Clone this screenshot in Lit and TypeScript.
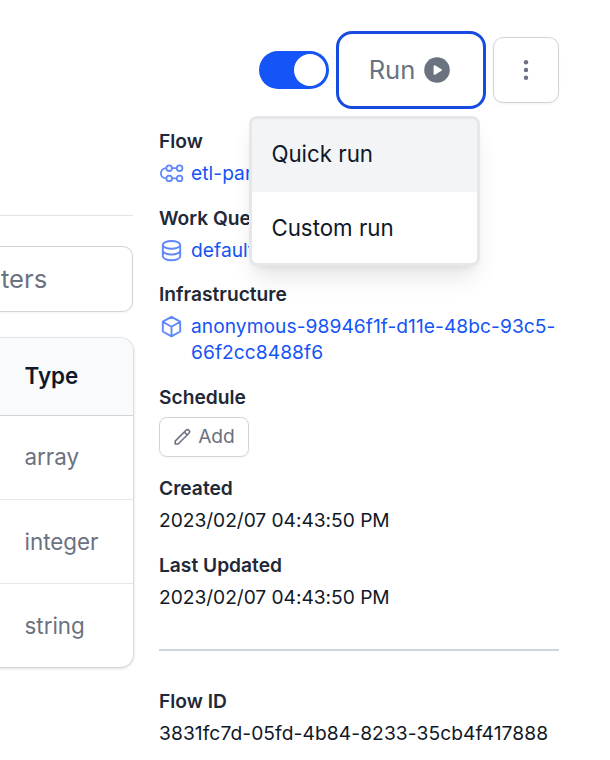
import { LitElement, html, css, svg } from "lit";
import { customElement } from "lit/decorators.js";

const flowIcon = svg`<svg class="icon" viewBox="0 0 25 25" fill="none" stroke="currentColor" stroke-width="1.8">
  <circle cx="10.2" cy="7.2" r="2.8"/><circle cx="20.6" cy="7.2" r="2.8"/>
  <circle cx="10.2" cy="17.4" r="2.8"/><circle cx="20.6" cy="17.4" r="2.8"/>
  <path d="M7.4 7.2C4 7.2 1.9 9.4 1.9 12.3s2.1 5.1 5.5 5.1M13 7.2h4.8M13 17.4h4.8"/></svg>`;
const queueIcon = svg`<svg class="icon" viewBox="0 0 25 25" fill="none" stroke="currentColor" stroke-width="1.9">
  <ellipse cx="12.5" cy="6.9" rx="8.7" ry="3.9"/>
  <path d="M3.8 6.9v11.4c0 2.2 3.9 3.9 8.7 3.9s8.7-1.7 8.7-3.9V6.9M3.8 12.6c0 2.2 3.9 3.9 8.7 3.9s8.7-1.7 8.7-3.9"/></svg>`;
const cubeIcon = svg`<svg class="icon" viewBox="0 0 25 25" fill="none" stroke="currentColor" stroke-width="1.9" stroke-linejoin="round" stroke-linecap="round">
  <path d="M21.2 7.7 12.5 2.8 3.8 7.7v9.8l8.7 4.9 8.7-4.9zM3.8 7.7l8.7 5 8.7-5M12.5 12.7v9.7"/></svg>`;

@customElement("app-root")
export class AppRoot extends LitElement {
  static styles = css`
    :host {
      display: flex;
      gap: 25px;
      box-sizing: border-box;
      width: 610px;
      height: 760px;
      overflow: hidden;
      background: #fff;
      color: #111827;
      font-family: Inter, "Liberation Sans", sans-serif;
      font-size: 19.2px;
      line-height: 25.6px;
    }
    * { box-sizing: border-box; }
    button { font: inherit; margin: 0; padding: 0; background: #fff; color: #6b7280; }
    .main { width: 134px; flex: none; padding-top: 215px; }
    .rule { width: 133px; height: 1px; background: #e2e4e8; }
    .search {
      width: 133px; height: 66px; margin-top: 30px; padding-left: 1px; display: flex; align-items: center;
      border: 1px solid #d1d5db; border-left: 0; border-radius: 0 10px 10px 0;
      color: #6b7280; font-size: 25.6px; box-shadow: 0 1px 3px rgba(0,0,0,.05);
    }
    .table {
      width: 133px; margin-top: 26px; border-radius: 0 13px 13px 0; overflow: hidden;
      box-shadow: 0 0 0 1px rgba(0,0,0,.06), 0 1px 3px 1px rgba(0,0,0,.13);
      font-size: 22.4px; color: #6b7280;
    }
    .cell { height: 84px; padding: 0 0 0 24.5px; display: flex; align-items: center; }
    .cell + .cell { border-top: 1px solid #e5e7eb; }
    .cell.head { height: 77px; padding-bottom: 1px; background: #f9fafb; color: #111827; font-weight: 600; }
    .cell.head + .cell { border-top-color: #d1d5db; padding-bottom: 2px; }
    .side { width: 400px; flex: none; padding-top: 31px; }
    .actions { display: flex; align-items: center; justify-content: flex-end; height: 78px; }
    .toggle {
      width: 70px; height: 38px; border-radius: 19px; background: #1554f6;
      display: flex; align-items: center; justify-content: flex-end; padding: 0 3px; margin-right: 7px;
    }
    .thumb { width: 32px; height: 32px; border-radius: 50%; background: #fff; }
    .run-wrap { position: relative; margin-right: 7px; }
    .run {
      width: 150px; height: 78px; border: 3px solid #174be0; border-radius: 16px; padding-right: 3px;
      display: flex; align-items: center; justify-content: center; gap: 9px; font-size: 25.6px;
    }
    .run svg { width: 26px; height: 26px; display: block; }
    .more {
      width: 66px; height: 66px; border: 1px solid #d1d5db; border-radius: 10px;
      display: flex; align-items: center; justify-content: center; box-shadow: 0 1px 3px rgba(0,0,0,.06);
    }
    .more svg { width: 6px; height: 22px; display: block; }
    .menu {
      position: absolute; top: 85px; right: 6px; width: 231px; height: 150px; z-index: 1;
      border: 3px solid #e5e7eb; border-radius: 8px; background: #fff; overflow: hidden;
      box-shadow: 0 16px 24px -5px rgba(0,0,0,.1), 0 6px 10px -6px rgba(0,0,0,.1);
      font-size: 22.3px;
    }
    .option { height: 73px; padding: 0 19.4px 2px; display: flex; align-items: center; }
    .option.active { background: #f3f4f6; padding-bottom: 4px; }
    .details { display: flex; flex-direction: column; gap: 19.2px; padding-top: 19.9px; }
    .item { display: flex; flex-direction: column; align-items: flex-start; gap: 6.4px; }
    .label { font-weight: 600; color: #1f2937; }
    .link { display: flex; gap: 7px; color: #1554f6; letter-spacing: .05px; }
    .date { letter-spacing: -.04px; }
    .id { letter-spacing: .09px; }
    .icon { width: 25px; height: 25px; flex: none; color: #6088f8; }
    .add {
      width: 90px; height: 40px; border: 1px solid #d1d5db; border-radius: 8px;
      display: flex; align-items: center; justify-content: center; gap: 7px;
      box-shadow: 0 1px 3px rgba(0,0,0,.05);
    }
    .add svg { width: 18px; height: 18px; }
    .divider { height: 2px; margin: 19.3px 0 18.8px; background: #cbd5e1; }
  `;

  private item(label: string, value: unknown) {
    return html`<div class="item"><div class="label">${label}</div>${value}</div>`;
  }

  private link(icon: unknown, lines: unknown) {
    return html`<div class="link">${icon}<span>${lines}</span></div>`;
  }

  render() {
    return html`
      <div class="main">
        <div class="rule"></div>
        <div class="search">ters</div>
        <div class="table">
          <div class="cell head">Type</div>
          ${["array", "integer", "string"].map((t) => html`<div class="cell">${t}</div>`)}
        </div>
      </div>
      <div class="side">
        <div class="actions">
          <div class="toggle"><div class="thumb"></div></div>
          <div class="run-wrap">
            <button class="run">Run
              <svg viewBox="0 0 26 26"><circle cx="13" cy="13" r="12.8" fill="#6b7280"/><path d="M10.5 9.1v7.8l6.5-3.9z" fill="#fff" stroke="#fff" stroke-width="1.8" stroke-linejoin="round"/></svg>
            </button>
            <div class="menu">
              <div class="option active">Quick run</div>
              <div class="option">Custom run</div>
            </div>
          </div>
          <button class="more">
            <svg viewBox="0 0 6 22" fill="#6b7280"><circle cx="3" cy="3.3" r="2.2"/><circle cx="3" cy="11" r="2.2"/><circle cx="3" cy="18.7" r="2.2"/></svg>
          </button>
        </div>
        <div class="details">
          ${this.item("Flow", this.link(flowIcon, "etl-par"))}
          ${this.item("Work Queue", this.link(queueIcon, "default"))}
          ${this.item("Infrastructure", this.link(cubeIcon, html`anonymous-98946f1f-d11e-48bc-93c5-<br />66f2cc8488f6`))}
          ${this.item("Schedule", html`<button class="add">
            <svg viewBox="0 0 18 18" fill="none" stroke="#6b7280" stroke-width="1.6" stroke-linejoin="round"><path d="M2.2 16v-2.9L13 2.3a2.05 2.05 0 0 1 2.9 2.9L5.1 16zM11.3 4l2.9 2.9"/></svg>Add</button>`)}
          ${this.item("Created", html`<div class="date">2023/02/07 04:43:50 PM</div>`)}
          ${this.item("Last Updated", html`<div class="date">2023/02/07 04:43:50 PM</div>`)}
          <div class="divider"></div>
          ${this.item("Flow ID", html`<div class="id">3831fc7d-05fd-4b84-8233-35cb4f417888</div>`)}
        </div>
      </div>
    `;
  }
}
